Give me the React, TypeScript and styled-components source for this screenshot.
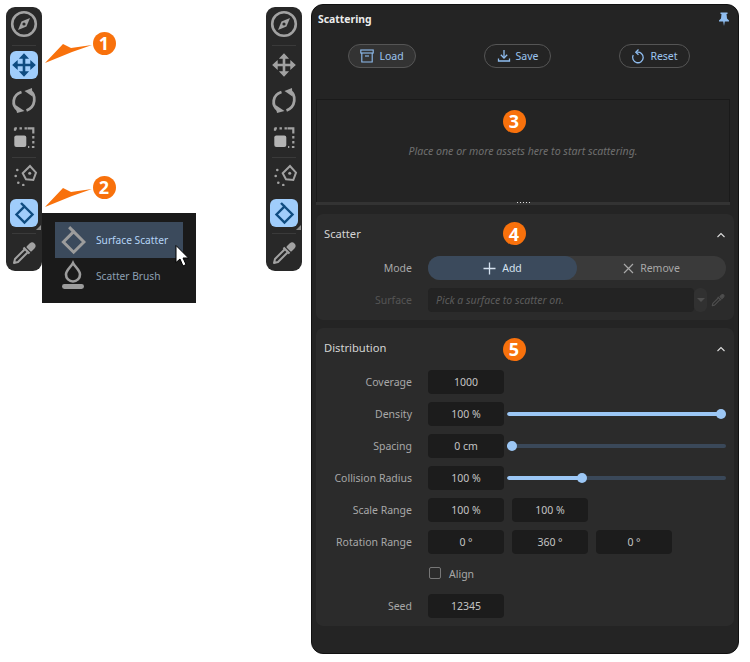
import React from "react";
import styled, { createGlobalStyle } from "styled-components";

const Global = createGlobalStyle`
  html, body { margin: 0; padding: 0; background: #fff; }
  * { box-sizing: border-box; }
`;

const Page = styled.div`
  position: relative;
  width: 750px;
  height: 662px;
  display: flex;
  align-items: flex-start;
  padding-left: 6px;
  font-family: "Noto Sans", "Open Sans", sans-serif;
  font-size: 10.5px;
  overflow: hidden;
`;

const Toolbar = styled.div<{ $gap: number }>`
  width: 36px;
  height: 264px;
  margin-top: 7px;
  margin-right: ${(p) => p.$gap}px;
  flex: none;
  padding: 3px 4px 0;
  background: #282828;
  border-radius: 9px;
  display: flex;
  flex-direction: column;
  align-items: center;
`;

const ToolBtn = styled.div<{ $active?: boolean; $gapTop?: number }>`
  position: relative;
  width: 28px;
  height: 28px;
  flex: none;
  margin-top: ${(p) => p.$gapTop ?? 0}px;
  border-radius: 6px;
  background: ${(p) => (p.$active ? "#a0cdfb" : "transparent")};
  display: flex;
  align-items: center;
  justify-content: center;
  svg { display: block; flex: none; }
`;

const Corner = styled.div`
  position: absolute;
  right: -3px;
  bottom: -3px;
  width: 0;
  height: 0;
  border-style: solid;
  border-width: 0 0 5px 5px;
  border-color: transparent transparent #8a8a8a transparent;
`;

const ToolSep = styled.div<{ $mt: number }>`
  width: 24px;
  height: 1px;
  flex: none;
  background: #3a3a3a;
  margin-top: ${(p) => p.$mt}px;
`;

const Panel = styled.div`
  width: 428px;
  height: 650px;
  margin-top: 4px;
  margin-left: 9px;
  flex: none;
  background: #242424;
  border: 1px solid #111;
  border-radius: 12px;
  display: flex;
  flex-direction: column;
`;

const PanelHead = styled.div`
  height: 28px;
  display: flex;
  align-items: center;
  justify-content: space-between;
  padding: 0 8px 0 6px;
`;

const PanelTitle = styled.div`
  color: #ececec;
  font-weight: 700;
  font-size: 10.4px;
`;

const Actions = styled.div`
  display: flex;
  justify-content: space-between;
  padding: 11px 48px 0 36px;
`;

const Action = styled.div<{ $w: number; $on?: boolean }>`
  width: ${(p) => p.$w}px;
  height: 24px;
  border-radius: 12px;
  border: 1px solid #555;
  background: ${(p) => (p.$on ? "#333" : "transparent")};
  color: #9cc4ef;
  display: flex;
  align-items: center;
  justify-content: center;
  gap: 5px;
`;

const Drop = styled.div`
  height: 103px;
  margin: 31px 8px 0 4px;
  border: 1px solid #1a1a1a;
  border-bottom: none;
  display: flex;
  align-items: center;
  justify-content: center;
  color: #6f6f6f;
  font-size: 10.6px;
  font-style: italic;
`;

const Splitter = styled.div`
  position: relative;
  height: 3px;
  margin: 0 8px 0 4px;
  background: #333;
  display: flex;
  justify-content: center;
`;

const Grip = styled.div`
  width: 13px;
  height: 1px;
  background-image: linear-gradient(90deg, #ddd 1px, transparent 1px);
  background-size: 3px 1px;
`;

const Section = styled.div<{ $h: number; $mt: number }>`
  height: ${(p) => p.$h}px;
  margin: ${(p) => p.$mt}px 4px 0 4px;
  background: #2b2b2b;
  border-radius: 7px;
  padding: 0 8px;
`;

const SectionHead = styled.div<{ $h: number }>`
  height: ${(p) => p.$h}px;
  display: flex;
  align-items: center;
  justify-content: space-between;
  color: #d4d4d4;
  font-size: 11.2px;
`;

const SectionTitle = styled.span`
  padding-bottom: 4px;
`;

const Rows = styled.div`
  display: flex;
  flex-direction: column;
  gap: 8px;
`;

const Row = styled.div`
  display: grid;
  grid-template-columns: 88px 1fr;
  column-gap: 16px;
  height: 24px;
  align-items: center;
`;

const Label = styled.div<{ $dim?: boolean }>`
  text-align: right;
  white-space: nowrap;
  color: ${(p) => (p.$dim ? "#555" : "#a8a8a8")};
`;

const Fields = styled.div`
  display: flex;
  align-items: center;
  gap: 8px;
  height: 24px;
`;

const NumField = styled.div`
  width: 76px;
  height: 24px;
  flex: none;
  background: #1c1c1c;
  border-radius: 4px;
  color: #c4c4c4;
  display: flex;
  align-items: center;
  justify-content: center;
`;

const Segment = styled.div`
  height: 24px;
  display: flex;
  background: #3a3a3a;
  border-radius: 12px;
`;

const SegBtn = styled.div<{ $on?: boolean }>`
  width: 149px;
  height: 24px;
  border-radius: 12px;
  background: ${(p) => (p.$on ? "#3b4a5c" : "transparent")};
  color: ${(p) => (p.$on ? "#d5e2f0" : "#a8a8a8")};
  display: flex;
  align-items: center;
  justify-content: center;
  gap: 6px;
`;

const SurfaceWrap = styled.div`
  display: flex;
  align-items: center;
  height: 24px;
`;

const SurfaceInput = styled.div`
  width: 266px;
  height: 24px;
  background: #232323;
  border-radius: 4px;
  color: #5c5c5c;
  font-style: italic;
  display: flex;
  align-items: center;
  padding-left: 8px;
`;

const Caret = styled.div`
  width: 13px;
  height: 24px;
  background: #313131;
  border-radius: 6px;
  display: flex;
  align-items: center;
  justify-content: center;
  &::after {
    content: "";
    border-style: solid;
    border-width: 4px 4px 0 4px;
    border-color: #4e4e4e transparent transparent transparent;
  }
`;

const SurfacePick = styled.div`
  margin-left: 3px;
  width: 16px;
  display: flex;
  justify-content: center;
`;

const SliderBox = styled.div`
  position: relative;
  width: 219px;
  height: 24px;
  margin-left: -5px;
  display: flex;
  align-items: center;
`;

const Track = styled.div`
  width: 100%;
  height: 4px;
  border-radius: 2px;
  background: #3a4859;
  overflow: hidden;
`;

const Fill = styled.div`
  height: 100%;
  background: #9cc7f5;
  border-radius: 2px;
`;

const Thumb = styled.div`
  position: absolute;
  top: 7px;
  width: 10px;
  height: 10px;
  margin-left: -5px;
  border-radius: 50%;
  background: #9cc7f5;
`;

const AlignWrap = styled.div`
  display: flex;
  align-items: center;
  gap: 8px;
  color: #a8a8a8;
  padding-left: 1px;
`;

const Check = styled.div`
  width: 12px;
  height: 12px;
  margin-top: -2px;
  border: 1.5px solid #777;
  border-radius: 2px;
`;

const Menu = styled.div`
  position: absolute;
  left: 42px;
  top: 213px;
  width: 154px;
  height: 90px;
  background: #1a1a1a;
  padding: 9px 13px;
  font-size: 10.2px;
`;

const MenuItem = styled.div<{ $on?: boolean }>`
  width: 128px;
  height: 36px;
  display: flex;
  align-items: center;
  background: ${(p) => (p.$on ? "#3b4a5c" : "transparent")};
  color: ${(p) => (p.$on ? "#b4d4f6" : "#8da0b4")};
`;

const MenuGlyph = styled.span<{ $ml: number; $mr: number }>`
  display: flex;
  flex: none;
  margin: 0 ${(p) => p.$mr}px 0 ${(p) => p.$ml}px;
`;

const Cursor = styled.svg`
  position: absolute;
  left: 174px;
  top: 244px;
`;

const Badge = styled.div<{ $x: number; $y: number }>`
  position: absolute;
  left: ${(p) => p.$x - 11.5}px;
  top: ${(p) => p.$y - 11.5}px;
  width: 23px;
  height: 23px;
  border-radius: 50%;
  background: #f8710c;
  color: #fff;
  font-family: "Open Sans", sans-serif;
  font-weight: 700;
  font-size: 18px;
  display: flex;
  align-items: center;
  justify-content: center;
`;

const Pointer = styled.svg<{ $y: number }>`
  position: absolute;
  left: 44px;
  top: ${(p) => p.$y}px;
`;

const GREY = "#a2a2a2";

const Compass = () => (
  <svg width="30" height="30" viewBox="0 0 30 30" fill="none">
    <circle cx="15" cy="15" r="11.8" stroke={GREY} strokeWidth="2.6" />
    <path d="M21 9 L17.5 17.5 L9 21 L12.5 12.500 Z" fill={GREY} />
    <circle cx="15" cy="15" r="1.6" fill="#282828" />
  </svg>
);

const MoveIcon = ({ c }: { c: string }) => (
  <svg width="28" height="28" viewBox="0 0 28 28" fill="none" stroke={c} strokeWidth="2.6">
    <path d="M14 5v18M5 14h18" />
    <path d="M10.5 7 L14 3.2 L17.5 7Z M10.5 21 L14 24.8 L17.5 21Z M7 10.5 L3.2 14 L7 17.5Z M21 10.5 L24.8 14 L21 17.5Z" fill={c} strokeWidth="1.4" />
  </svg>
);

const RotateIcon = () => (
  <svg width="28" height="28" viewBox="0 0 28 28" fill="none" stroke={GREY} strokeWidth="2.800">
    <path d="M11.500 6 C2 9 1.500 19.500 8 24" />
    <path d="M16.500 24.500 C26 21 26.500 9 20 5" />
    <path d="M5.500 19 L7 27 L14.500 25 Z" fill={GREY} stroke="none" />
    <path d="M14.500 5 L22 2 L22.500 10.500 Z" fill={GREY} stroke="none" />
  </svg>
);

const ScaleIcon = () => (
  <svg width="28" height="28" viewBox="0 0 28 28" fill="none">
    <rect x="4.300" y="13.500" width="12" height="11.500" rx="2" fill="#b4b4b4" />
    <path d="M4.500 6.300 H17 M5 6.300 V11" stroke={GREY} strokeWidth="2.200" strokeDasharray="2.400 2.600" />
    <path d="M17.500 6.300 H23.300 V11.500" stroke={GREY} strokeWidth="2.200" />
    <path d="M23.300 14 V25 H18" stroke={GREY} strokeWidth="2.200" strokeDasharray="2.400 2.600" />
  </svg>
);

const NibIcon = () => (
  <svg width="28" height="28" viewBox="0 0 28 28" fill="none">
    <path d="M12.700 15.300 L20 8 L26 14.700 L23.300 22 L16 21.300 Z" stroke={GREY} strokeWidth="2" />
    <circle cx="19.700" cy="15.300" r="1.500" fill={GREY} />
    <g fill={GREY}>
      <circle cx="7.300" cy="12" r="1.300" />
      <circle cx="5.700" cy="18" r="1.300" />
      <circle cx="8.300" cy="24.700" r="1.300" />
      <circle cx="13.300" cy="27" r="1.300" />
    </g>
  </svg>
);

const DiamondIcon = ({ c, s, w }: { c: string; s: number; w: number }) => (
  <svg width={s} height={s} viewBox="0 0 28 28" fill="none" stroke={c} strokeWidth={w}>
    <path d="M14.500 7.500 L22.500 15.500 L14.500 23.500 L6.500 15.500 Z" />
    <path d="M14.500 7.500 L11 4" />
  </svg>
);

const BrushIcon = () => (
  <svg width="32" height="32" viewBox="0 0 32 32" fill="none">
    <path d="M16 3 C18 7 23 10 23 14.500 A7 7 0 0 1 9 14.500 C9 10 14 7 16 3 Z" stroke="#9c9c9c" strokeWidth="2.600" />
    <rect x="5" y="24" width="22" height="5" rx="2.400" fill="#9c9c9c" />
  </svg>
);

const PipetteIcon = ({ c, s }: { c: string; s: number }) => (
  <svg width={s} height={s} viewBox="0 0 28 28" fill="none" stroke={c} strokeWidth="2" strokeLinejoin="round">
    <path d="M14.500 10.500 L5 20 L4 24 L8 23 L17.500 13.500" />
    <path d="M13.500 8.500 L19.500 14.500" strokeWidth="2.200" />
    <path d="M17.500 8 L20.500 5 A2.500 2.500 0 0 1 24 8.500 L21 11.500 Z" fill={c} />
  </svg>
);

const PinIcon = () => (
  <svg width="12" height="14" viewBox="0 0 12 14">
    <path d="M2.500 0.500 H9.500 V2 H8.500 L9 6.500 L11 8.500 V9.500 H6.800 L6 14 L5.200 9.500 H1 V8.500 L3 6.500 L3.500 2 H2.500 Z" fill="#8fbdf0" />
  </svg>
);

const Chevron = () => (
  <svg width="10" height="6" viewBox="0 0 10 6" fill="none" stroke="#ddd" strokeWidth="1.100" style={{ display: "block" }}>
    <path d="M1.500 5 L5 1.500 L8.500 5" />
  </svg>
);

const ICON = "#8fbdf0";

const LoadIcon = () => (
  <svg width="14" height="14" viewBox="0 0 14 14" fill="none" stroke={ICON} strokeWidth="1.100">
    <rect x="0.800" y="1" width="12.400" height="3" />
    <path d="M1.800 4 V13 H12.200 V4" />
    <path d="M5 7 H9" />
  </svg>
);

const SaveIcon = () => (
  <svg width="14" height="14" viewBox="0 0 14 14" fill="none" stroke={ICON} strokeWidth="1.300">
    <path d="M7 1 V8.500" />
    <path d="M3.800 5.800 L7 9 L10.200 5.800" />
    <path d="M1.500 9.500 V12 H12.500 V9.500" />
  </svg>
);

const ResetIcon = () => (
  <svg width="14" height="15" viewBox="0 0 14 15" fill="none" stroke={ICON} strokeWidth="1.300">
    <path d="M6 3.200 A5.300 5.300 0 1 1 2.200 6" />
    <path d="M7.500 0.500 L4.800 3.200 L7.500 5.800" />
  </svg>
);

const PlusIcon = () => (
  <svg width="13" height="13" viewBox="0 0 13 13" stroke="#d5e2f0" strokeWidth="1.300" fill="none">
    <path d="M6.500 0.500 V12.500 M0.500 6.500 H12.500" />
  </svg>
);

const CrossIcon = () => (
  <svg width="11" height="11" viewBox="0 0 11 11" stroke="#a8a8a8" strokeWidth="1.200" fill="none">
    <path d="M1 1 L10 10 M10 1 L1 10" />
  </svg>
);

const Slider = ({ v }: { v: number }) => {
  const px = 5 + v * 209;
  return (
    <SliderBox>
      <Track>
        <Fill style={{ width: px }} />
      </Track>
      <Thumb style={{ left: px }} />
    </SliderBox>
  );
};

const Tools = ({ gap, first }: { gap: number; first: boolean }) => (
  <Toolbar $gap={gap}>
    <ToolBtn><Compass /></ToolBtn>
    <ToolSep $mt={7} />
    <ToolBtn $active={first} $gapTop={5}>
      <MoveIcon c={first ? "#0f4c81" : GREY} />
    </ToolBtn>
    <ToolBtn $gapTop={7}><RotateIcon /></ToolBtn>
    <ToolBtn $gapTop={8}><ScaleIcon /></ToolBtn>
    <ToolSep $mt={7} />
    <ToolBtn><NibIcon /></ToolBtn>
    <ToolBtn $active $gapTop={13}>
      <DiamondIcon c="#0f4c81" s={28} w={2.400} />
      <Corner />
    </ToolBtn>
    <ToolSep $mt={6} />
    <ToolBtn $gapTop={5}><PipetteIcon c={GREY} s={28} /></ToolBtn>
  </Toolbar>
);

const rows: { l: string; vals: string[]; slider?: number }[] = [
  { l: "Coverage", vals: ["1000"] },
  { l: "Density", vals: ["100 %"], slider: 1 },
  { l: "Spacing", vals: ["0 cm"], slider: 0 },
  { l: "Collision Radius", vals: ["100 %"], slider: 0.335 },
  { l: "Scale Range", vals: ["100 %", "100 %"] },
  { l: "Rotation Range", vals: ["0 °", "360 °", "0 °"] },
];

export default function App() {
  return (
    <Page>
      <Global />
      <Tools gap={224} first />
      <Tools gap={0} first={false} />
      <Panel>
        <PanelHead>
          <PanelTitle>Scattering</PanelTitle>
          <PinIcon />
        </PanelHead>
        <Actions>
          <Action $w={68} $on><LoadIcon />Load</Action>
          <Action $w={67}><SaveIcon />Save</Action>
          <Action $w={71}><ResetIcon />Reset</Action>
        </Actions>
        <Drop>Place one or more assets here to start scattering.</Drop>
        <Splitter><Grip /></Splitter>
        <Section $h={106} $mt={9}>
          <SectionHead $h={42}><SectionTitle>Scatter</SectionTitle><Chevron /></SectionHead>
          <Rows>
            <Row>
              <Label>Mode</Label>
              <Segment>
                <SegBtn $on><PlusIcon />Add</SegBtn>
                <SegBtn><CrossIcon />Remove</SegBtn>
              </Segment>
            </Row>
            <Row>
              <Label $dim>Surface</Label>
              <SurfaceWrap>
                <SurfaceInput>Pick a surface to scatter on.</SurfaceInput>
                <Caret />
                <SurfacePick><PipetteIcon c="#4e4e4e" s={16} /></SurfacePick>
              </SurfaceWrap>
            </Row>
          </Rows>
        </Section>
        <Section $h={298} $mt={8}>
          <SectionHead $h={42}><SectionTitle>Distribution</SectionTitle><Chevron /></SectionHead>
          <Rows>
            {rows.map((r) => (
              <Row key={r.l}>
                <Label>{r.l}</Label>
                <Fields>
                  {r.vals.map((v, i) => <NumField key={i}>{v}</NumField>)}
                  {r.slider !== undefined && <Slider v={r.slider} />}
                </Fields>
              </Row>
            ))}
            <Row>
              <span />
              <AlignWrap><Check />Align</AlignWrap>
            </Row>
            <Row>
              <Label>Seed</Label>
              <Fields><NumField>12345</NumField></Fields>
            </Row>
          </Rows>
        </Section>
      </Panel>

      <Menu>
        <MenuItem $on>
          <MenuGlyph $ml={0} $mr={5}><DiamondIcon c="#9c9c9c" s={36} w={2.300} /></MenuGlyph>
          Surface Scatter
        </MenuItem>
        <MenuItem>
          <MenuGlyph $ml={2} $mr={7}><BrushIcon /></MenuGlyph>
          Scatter Brush
        </MenuItem>
      </Menu>
      <Cursor width="17" height="24" viewBox="0 0 17 24">
        <path d="M2 1.500 V18.500 L6 15 L9 22 L12 20.500 L9 14 H14.500 Z" fill="#fff" stroke="#000" strokeWidth="1" />
      </Cursor>

      <Pointer $y={42} width="50" height="24" viewBox="0 0 50 24"><path d="M1 21 L19 2 L27 6 L48 3 L28 10 Z" fill="#f8710c" /></Pointer>
      <Pointer $y={186} width="50" height="24" viewBox="0 0 50 24"><path d="M1 21 L19 2 L27 6 L48 3 L28 10 Z" fill="#f8710c" /></Pointer>
      <Badge $x={104} $y={43}>1</Badge>
      <Badge $x={104} $y={187}>2</Badge>
      <Badge $x={514} $y={121}>3</Badge>
      <Badge $x={514} $y={233.500}>4</Badge>
      <Badge $x={514} $y={349}>5</Badge>
    </Page>
  );
}
